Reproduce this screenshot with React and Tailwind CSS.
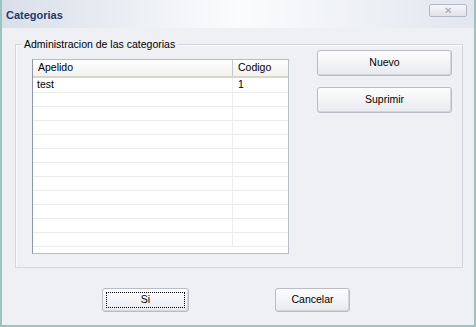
import React from "react";

const rows = [
  { name: "test", code: "1" },
  ...Array.from({ length: 11 }, () => ({ name: "", code: "" })),
];

const WinButton = ({ children, focused, className = "" }) => (
  <button
    className={`flex items-center justify-center rounded-[3px] border border-[#b9bcc6] bg-gradient-to-b from-[#fdfdfe] to-[#e9eaef] text-[10.5px] text-black shadow-[inset_-1px_-1px_0_#d3d5dc] ${className}`}>
    {focused ? (
      <span className="flex h-[calc(100%-6px)] w-[calc(100%-6px)] items-center justify-center border border-dotted border-black">
        {children}
      </span>
    ) : (
      children
    )}
  </button>
);

export default function App() {
  return (
    <div
      className="flex h-[327px] w-[476px] flex-col border-b-2 border-l-2 border-r-2 border-[#9cc4bf] bg-[#eef0f4]"
      style={{ fontFamily: '"Liberation Sans", Arial, sans-serif' }}>
      {/* title bar */}
      <div className="flex h-[28px] items-start justify-between bg-gradient-to-r from-[#d9dfe9] via-[#fbfcfd] to-[#e2e6ee] pl-[4px] pr-[7px]">
        <span className="mt-[7px] text-[11px] font-bold text-[#1c3a6c]">
          Categorias
        </span>
        <div className="mt-[4px] flex h-[13px] w-[38px] items-center justify-center rounded-[2px] border border-[#b3b8c4] bg-gradient-to-b from-[#f6f7f9] to-[#dfe2e8] text-[10px] leading-none text-[#9ea4ae]">
          ✕
        </div>
      </div>

      {/* group box */}
      <div className="relative ml-[13px] mt-[16px] flex h-[224px] w-[448px] items-start border border-[#d3d6dd] pl-[16px] pr-[10px] shadow-[inset_1px_1px_0_#fbfbfd]">
        <span className="absolute left-[6px] top-[-8px] bg-[#eef0f4] px-[2px] text-[10.5px] leading-[14px] text-black">
          Administracion de las categorias
        </span>

        {/* list */}
        <div className="mt-[14px] flex h-[195px] w-[257px] flex-col overflow-hidden border border-[#b7bdc8] border-l-[#8e96a8] bg-white text-[10.5px] text-black">
          <div className="flex h-[18px] shrink-0 border-b-2 border-[#d8d6cb] bg-gradient-to-b from-[#ffffff] to-[#f1f1ee]">
            <div className="flex w-[200px] items-center border-r border-[#c9c9c2] pl-[5px]">
              Apelido
            </div>
            <div className="flex flex-1 items-center pl-[5px]">Codigo</div>
          </div>
          {rows.map((r, i) => (
            <div
              key={i}
              className={`flex shrink-0 border-b border-[#ececef] ${
                i === 0 ? "h-[15px]" : "h-[14px]"
              }`}>
              <div className="flex w-[200px] items-center border-r border-[#ededf0] pl-[4px]">
                {r.name}
              </div>
              <div className="flex flex-1 items-center pl-[5px]">{r.code}</div>
            </div>
          ))}
        </div>

        {/* side buttons */}
        <div className="ml-[28px] mt-[5px] flex flex-col gap-[11px]">
          <WinButton className="h-[26px] w-[135px]">Nuevo</WinButton>
          <WinButton className="h-[26px] w-[135px]">Suprimir</WinButton>
        </div>
      </div>

      {/* bottom buttons */}
      <div className="ml-[100px] mt-[20px] flex gap-[86px]">
        <WinButton focused className="h-[24px] w-[87px]">
          Si
        </WinButton>
        <WinButton className="h-[24px] w-[75px]">Cancelar</WinButton>
      </div>
    </div>
  );
}
